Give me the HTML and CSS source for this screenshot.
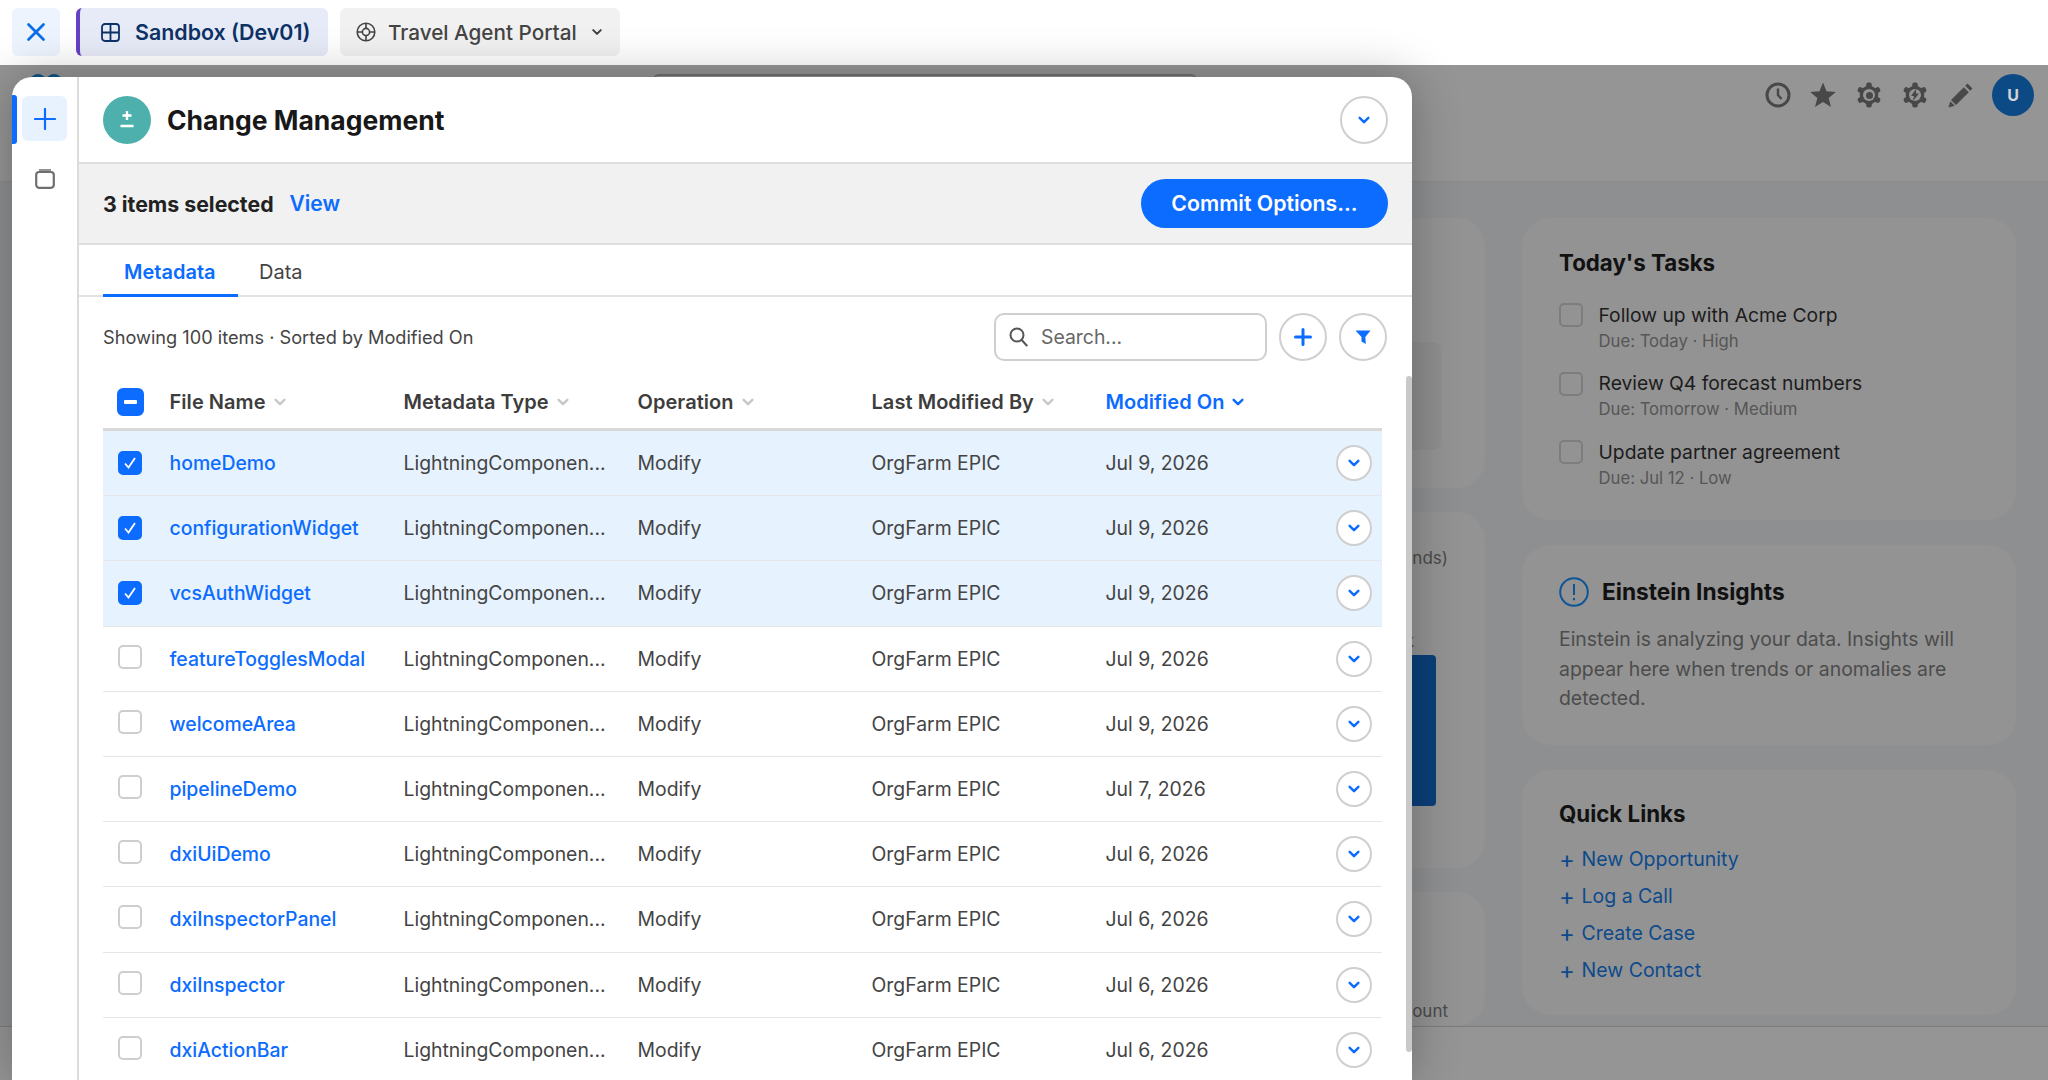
FILE: index.html
```html
<!DOCTYPE html>
<html lang="en">
<head>
<meta charset="utf-8">
<title>Change Management</title>
<link rel="stylesheet" href="styles.css">
</head>
<body>
<svg class="defs" width="0" height="0" aria-hidden="true">
  <symbol id="chev" viewBox="0 0 16 16"><path d="M3 5.500 8 10.500 13 5.500" fill="none" stroke="currentColor" stroke-width="2.800" stroke-linecap="round" stroke-linejoin="round"/></symbol>
  <symbol id="gear" viewBox="0 0 28 28"><circle cx="14" cy="14" r="10" fill="#484848"/><g fill="#484848"><rect x="11" y="0.500" width="6" height="27" rx="2.500"/><rect x="11" y="0.500" width="6" height="27" rx="2.500" transform="rotate(60 14 14)"/><rect x="11" y="0.500" width="6" height="27" rx="2.500" transform="rotate(120 14 14)"/></g></symbol>
</svg>
<header class="topbar">
  <button class="close-btn" type="button"><svg width="20" height="20" viewBox="0 0 20 20"><path d="M2.500 2.500 17.500 17.500M17.500 2.500 2.500 17.500" stroke="#0b6fe8" stroke-width="2.800" stroke-linecap="round"/></svg></button>
  <div class="app-tab app-tab-active">
    <svg width="19" height="19" viewBox="0 0 19 19"><rect x="1" y="1" width="17" height="17" rx="3" fill="none" stroke="#0d3266" stroke-width="1.800"/><path d="M9.500 1v17M1 9.500h17" stroke="#0d3266" stroke-width="1.800"/></svg>
    <span>Sandbox (Dev01)</span>
  </div>
  <div class="app-tab app-tab-idle">
    <svg width="20" height="20" viewBox="0 0 20 20" fill="none" stroke="#444" stroke-width="1.600"><circle cx="10" cy="10" r="8.800"/><circle cx="10" cy="10" r="3.600"/><path d="M10 1v5.500M10 13.500V19M1 10h5.500M13.500 10H19"/></svg>
    <span>Travel Agent Portal</span>
    <svg class="tab-chev" width="12" height="12"><use href="#chev"/></svg>
  </div>
</header>

<div class="stage">
  <div class="backdrop">
    <div class="bd-head">
      <div class="bd-logo"><i></i><i></i></div>
      <div class="bd-search"></div>
      <div class="bd-icons">
        <svg width="26" height="26" viewBox="0 0 26 26" fill="none" stroke="#484848" stroke-width="3"><circle cx="13" cy="13" r="11"/><path d="M13 6.500V13l3.500 4" stroke-width="2.400"/></svg>
        <svg width="26" height="26" viewBox="0 0 26 26"><path fill="#484848" d="M13 .5l3.500 8.700 9.300.7-7.100 6 2.300 9.100L13 20l-8 5 2.300-9.100-7.100-6 9.300-.7z"/></svg>
        <span class="gear"><svg width="26" height="26"><use href="#gear"/></svg><i class="gear-hole"></i><i class="gear-dot"></i></span>
        <span class="gear"><svg width="26" height="26"><use href="#gear"/></svg><i class="gear-hole"></i><svg class="gear-bolt" width="10" height="12" viewBox="0 0 10 12"><path fill="#484848" d="M6 0 1 7h3L3 12l6-7.500H6z"/></svg></span>
        <svg width="26" height="26" viewBox="0 0 26 26"><path fill="#484848" d="M19.500 1.500l5 5-2.300 2.300-5-5zM15.800 5.200l5 5L8 23l-5-5zM2.200 19.200l4.600 4.600L.5 25.500z"/></svg>
        <div class="bd-avatar">U</div>
      </div>
    </div>
    <div class="bd-main">
      <div class="bd-col bd-col-left">
        <section class="bd-card bd-card-a"><div class="bd-inner"></div></section>
        <section class="bd-card bd-card-b">
          <p class="bd-muted">Pipeline by Stage (Thousands)</p>
          <p class="bd-muted bd-risk">Risk</p>
          <div class="bd-bar"></div>
        </section>
        <section class="bd-card bd-card-c"><p class="bd-muted">Account</p></section>
      </div>
      <div class="bd-col bd-col-right">
        <section class="bd-card tasks">
          <h3>Today's Tasks</h3>
          <div class="task"><i class="task-box"></i><div><div class="task-name">Follow up with Acme Corp</div><div class="task-due">Due: Today · High</div></div></div>
          <div class="task"><i class="task-box"></i><div><div class="task-name">Review Q4 forecast numbers</div><div class="task-due">Due: Tomorrow · Medium</div></div></div>
          <div class="task"><i class="task-box"></i><div><div class="task-name">Update partner agreement</div><div class="task-due">Due: Jul 12 · Low</div></div></div>
        </section>
        <section class="bd-card insights">
          <h3 class="ins-head"><svg width="30" height="30" viewBox="0 0 30 30" fill="none" stroke="#0e5596" stroke-width="2"><circle cx="15" cy="15" r="13.800"/><path d="M15 7v11M15 21v2.200"/></svg>Einstein Insights</h3>
          <p>Einstein is analyzing your data. Insights will appear here when trends or anomalies are detected.</p>
        </section>
        <section class="bd-card links">
          <h3>Quick Links</h3>
          <div class="q-link"><span>+</span>New Opportunity</div>
          <div class="q-link"><span>+</span>Log a Call</div>
          <div class="q-link"><span>+</span>Create Case</div>
          <div class="q-link"><span>+</span>New Contact</div>
        </section>
      </div>
    </div>
    <div class="bd-foot"></div>
  </div>

  <div class="modal">
    <aside class="rail">
      <div class="rail-add"><svg width="22" height="22" viewBox="0 0 22 22"><path d="M11 1v20M1 11h20" stroke="#0b6cff" stroke-width="2.200" stroke-linecap="round"/></svg></div>
      <svg class="rail-doc" width="20" height="20" viewBox="0 0 20 20" fill="none" stroke="#6f6f6f" stroke-width="2.200"><rect x="1.200" y="3" width="17.600" height="15.800" rx="3"/><path d="M4 1.100h12" stroke-width="1.500"/></svg>
    </aside>
    <div class="panel">
      <div class="panel-head">
        <div class="avatar"><svg width="14" height="17" viewBox="0 0 14 17"><path d="M7 0v9M2.500 4.500h9M.5 15h13" stroke="#fff" stroke-width="2.400"/></svg></div>
        <h1>Change Management</h1>
        <button class="round round-lg" type="button"><svg width="14" height="14"><use href="#chev"/></svg></button>
      </div>
      <div class="sel-bar">
        <strong>3 items selected</strong>
        <a class="sel-view">View</a>
        <button class="commit" type="button">Commit Options...</button>
      </div>
      <div class="tabs">
        <div class="tab tab-on">Metadata</div>
        <div class="tab">Data</div>
      </div>
      <div class="toolbar">
        <span class="count">Showing 100 items · Sorted by Modified On</span>
        <div class="search">
          <svg width="19" height="20" viewBox="0 0 19 20" fill="none" stroke="#555" stroke-width="2"><circle cx="8" cy="8" r="6.500"/><path d="M12.700 13l5 5.500" stroke-linecap="round"/></svg>
          <span>Search...</span>
        </div>
        <button class="round round-lg" type="button"><svg width="18" height="18" viewBox="0 0 18 18"><path d="M9 1.500v15M1.500 9h15" stroke="#0b6cff" stroke-width="3" stroke-linecap="round"/></svg></button>
        <button class="round round-lg" type="button"><svg width="16" height="16" viewBox="0 0 16 16"><path fill="#0b6cff" d="M.5 1.500h15l-5.200 6.500.5 7-4.300-2.500V8z"/></svg></button>
      </div>
      <div class="table">
        <div class="thead row-grid">
          <span class="cb cb-mixed"><i></i></span>
          <span class="th">File Name<svg width="14" height="14"><use href="#chev"/></svg></span>
          <span class="th">Metadata Type<svg width="14" height="14"><use href="#chev"/></svg></span>
          <span class="th">Operation<svg width="14" height="14"><use href="#chev"/></svg></span>
          <span class="th">Last Modified By<svg width="14" height="14"><use href="#chev"/></svg></span>
          <span class="th th-on">Modified On<svg width="14" height="14"><use href="#chev"/></svg></span>
        </div>
        <div class="tr row-grid is-sel"><span class="cb cb-on"><svg width="16" height="16" viewBox="0 0 16 16"><path d="M3 8.500 6.500 12.500 13 3" fill="none" stroke="#fff" stroke-width="1.800"/></svg></span><a class="name">homeDemo</a><span>LightningComponen...</span><span>Modify</span><span>OrgFarm EPIC</span><span>Jul 9, 2026</span><button class="round round-sm" type="button"><svg width="14" height="14"><use href="#chev"/></svg></button></div>
        <div class="tr row-grid is-sel"><span class="cb cb-on"><svg width="16" height="16" viewBox="0 0 16 16"><path d="M3 8.500 6.500 12.500 13 3" fill="none" stroke="#fff" stroke-width="1.800"/></svg></span><a class="name">configurationWidget</a><span>LightningComponen...</span><span>Modify</span><span>OrgFarm EPIC</span><span>Jul 9, 2026</span><button class="round round-sm" type="button"><svg width="14" height="14"><use href="#chev"/></svg></button></div>
        <div class="tr row-grid is-sel"><span class="cb cb-on"><svg width="16" height="16" viewBox="0 0 16 16"><path d="M3 8.500 6.500 12.500 13 3" fill="none" stroke="#fff" stroke-width="1.800"/></svg></span><a class="name">vcsAuthWidget</a><span>LightningComponen...</span><span>Modify</span><span>OrgFarm EPIC</span><span>Jul 9, 2026</span><button class="round round-sm" type="button"><svg width="14" height="14"><use href="#chev"/></svg></button></div>
        <div class="tr row-grid"><span class="cb"></span><a class="name">featureTogglesModal</a><span>LightningComponen...</span><span>Modify</span><span>OrgFarm EPIC</span><span>Jul 9, 2026</span><button class="round round-sm" type="button"><svg width="14" height="14"><use href="#chev"/></svg></button></div>
        <div class="tr row-grid"><span class="cb"></span><a class="name">welcomeArea</a><span>LightningComponen...</span><span>Modify</span><span>OrgFarm EPIC</span><span>Jul 9, 2026</span><button class="round round-sm" type="button"><svg width="14" height="14"><use href="#chev"/></svg></button></div>
        <div class="tr row-grid"><span class="cb"></span><a class="name">pipelineDemo</a><span>LightningComponen...</span><span>Modify</span><span>OrgFarm EPIC</span><span>Jul 7, 2026</span><button class="round round-sm" type="button"><svg width="14" height="14"><use href="#chev"/></svg></button></div>
        <div class="tr row-grid"><span class="cb"></span><a class="name">dxiUiDemo</a><span>LightningComponen...</span><span>Modify</span><span>OrgFarm EPIC</span><span>Jul 6, 2026</span><button class="round round-sm" type="button"><svg width="14" height="14"><use href="#chev"/></svg></button></div>
        <div class="tr row-grid"><span class="cb"></span><a class="name">dxiInspectorPanel</a><span>LightningComponen...</span><span>Modify</span><span>OrgFarm EPIC</span><span>Jul 6, 2026</span><button class="round round-sm" type="button"><svg width="14" height="14"><use href="#chev"/></svg></button></div>
        <div class="tr row-grid"><span class="cb"></span><a class="name">dxiInspector</a><span>LightningComponen...</span><span>Modify</span><span>OrgFarm EPIC</span><span>Jul 6, 2026</span><button class="round round-sm" type="button"><svg width="14" height="14"><use href="#chev"/></svg></button></div>
        <div class="tr row-grid"><span class="cb"></span><a class="name">dxiActionBar</a><span>LightningComponen...</span><span>Modify</span><span>OrgFarm EPIC</span><span>Jul 6, 2026</span><button class="round round-sm" type="button"><svg width="14" height="14"><use href="#chev"/></svg></button></div>
      </div>
      <div class="scroll-thumb"></div>
    </div>
  </div>
</div>
</body>
</html>
```

FILE: styles.css
```css
* { box-sizing: border-box; }
html, body { margin: 0; height: 100%; }
body {
  width: 2048px; height: 1080px; overflow: hidden; background: #fff;
  font-family: Inter, "Liberation Sans", sans-serif; font-size: 19.400px; color: #444;
  display: flex; flex-direction: column;
}
.defs { position: absolute; }
button { font-family: inherit; padding: 0; cursor: pointer; }
h1, h3, p { margin: 0; }

/* top bar */
.topbar { height: 65px; flex: none; display: flex; align-items: flex-start; padding: 8px 12px; background: #fff; }
.close-btn { width: 48px; height: 48px; border: 0; border-radius: 6px; background: #eef4fd; display: flex; align-items: center; justify-content: center; margin-right: 16px; }
.app-tab { height: 48px; border-radius: 6px; display: flex; align-items: center; }
.app-tab-active { width: 252px; background: #e7ebf7; border-left: 4px solid #6541c6; padding-left: 21px; gap: 15px; color: #0d3266; font-weight: 600; font-size: 21.400px; margin-right: 12px; }
.app-tab-idle { width: 280px; background: #f1f1f1; padding-left: 16px; gap: 12px; color: #444; font-weight: 500; font-size: 20.700px; }
.tab-chev { color: #444; margin-left: 2px; }

/* dimmed page behind the modal */
.stage { position: relative; flex: 1; min-height: 0; }
.backdrop { height: 100%; display: flex; flex-direction: column; background: #8e8f91; }
.bd-head { height: 117px; flex: none; background: #959595; border-bottom: 1px solid #8a8a8a; display: flex; align-items: flex-start; padding: 9px 14px 0 30px; }
.bd-logo { display: flex; width: 623px; }
.bd-logo i { width: 16px; height: 16px; border-radius: 50%; background: #0d5687; }
.bd-search { width: 544px; height: 46px; border: 2px solid #707070; border-radius: 6px; }
.bd-icons { margin-left: auto; display: flex; align-items: center; gap: 20px; height: 42px; }
.bd-icons > svg:first-child { margin-right: -1px; }
.bd-avatar { width: 42px; height: 42px; margin-left: -2px; border-radius: 50%; background: #0b4a85; color: #d4d4d4; font-weight: 700; font-size: 16px; display: flex; align-items: center; justify-content: center; }
.gear { position: relative; width: 26px; height: 26px; }
.gear svg { display: block; }
.gear-hole { position: absolute; left: 7px; top: 7px; width: 12px; height: 12px; border-radius: 50%; background: #959595; }
.gear-dot { position: absolute; left: 9.500px; top: 9.500px; width: 7px; height: 7px; border-radius: 50%; background: #484848; }
.gear .gear-bolt { position: absolute; left: 8px; top: 7px; }

.bd-main { flex: 1; min-height: 0; display: grid; grid-template-columns: 1fr 494px; gap: 37px; padding: 36px 32px 0 24px; overflow: hidden; }
.bd-col { display: flex; flex-direction: column; }
.bd-col-left { gap: 24px; }
.bd-col-right { gap: 25px; }
.bd-card { background: #939393; border-radius: 28px; padding: 0 37px; flex: none; }
.bd-card h3 { font-size: 22.300px; font-weight: 700; color: #111; line-height: 28px; }
.bd-card-a { height: 270px; position: relative; display: flex; justify-content: flex-end; align-items: flex-start; padding: 124px 44px 0 0; }
.bd-inner { width: 80px; height: 108px; border-radius: 8px; background: #8e8e8e; }
.bd-card-b { height: 356px; display: flex; flex-direction: column; align-items: flex-end; padding-top: 34px; }
.bd-card-c { flex: 1; display: flex; justify-content: flex-end; align-items: flex-end; padding-bottom: 3px; }
.bd-muted { font-size: 17px; color: #4a4a4a; line-height: 24px; }
.bd-risk { margin: 59px 34px 0 0; }
.bd-bar { width: 700px; height: 151px; margin: 2px 12px 0 0; border-radius: 4px; background: #0b3f78; }

.tasks { height: 302px; padding-top: 31px; }
.task { display: flex; gap: 15.500px; margin-top: 0; height: 68.500px; }
.tasks h3 { margin-bottom: 29px; }
.task-box { width: 24px; height: 24px; flex: none; margin-top: -3px; border: 2px solid #7d7d7d; border-radius: 5px; }
.task-name { color: #1c1c1c; font-size: 19.300px; line-height: 24px; margin-top: -3.500px; }
.task-due { color: #565656; font-size: 16.700px; line-height: 24px; margin-top: 2px; }
.insights { height: 200px; padding-top: 32px; }
.bd-card .ins-head { display: flex; align-items: center; gap: 13px; height: 30px; margin-bottom: 18px; font-size: 22.700px; }
.insights p { color: #4c4c4c; font-size: 19.400px; line-height: 29.500px; }
.links { height: 245px; padding-top: 30px; }
.links h3 { margin-bottom: 13px; }
.q-link { height: 37px; line-height: 37px; color: #0d4a8c; font-size: 19.500px; display: flex; }
.q-link span { width: 22.500px; font-size: 24px; }
.bd-foot { height: 54px; flex: none; background: #959595; border-top: 1px solid #7c7c7c; }

/* modal */
.modal { position: absolute; left: 12px; top: 12px; bottom: 0; width: 1400px; background: #fff; border-radius: 20px 20px 0 0; display: flex; box-shadow: 0 0 48px rgba(0,0,0,.28); overflow: hidden; }
.rail { width: 67px; flex: none; border-right: 2px solid #dcdcdc; display: flex; flex-direction: column; align-items: center; padding: 19px 0 0; position: relative; }
.rail::before { content: ""; position: absolute; left: 0; top: 18px; width: 5px; height: 49px; background: #0b6cff; border-radius: 0 3px 3px 0; }
.rail-add { width: 45px; height: 45px; border-radius: 6px; background: #e8f2fe; display: flex; align-items: center; justify-content: center; }
.rail-doc { margin: 28px 0 0; }
.panel { flex: 1; min-width: 0; display: flex; flex-direction: column; position: relative; }
.panel-head { height: 87px; flex: none; border-bottom: 2px solid #dedede; display: flex; align-items: center; padding: 0 24px; gap: 16px; }
.avatar { width: 48px; height: 48px; border-radius: 50%; background: #4eb0ac; display: flex; align-items: center; justify-content: center; flex: none; }
h1 { font-size: 26.500px; font-weight: 700; color: #181818; flex: 1; }
.round { background: #fff; border: 2px solid #cfcfcf; border-radius: 50%; color: #0b6cff; display: flex; align-items: center; justify-content: center; flex: none; }
.round-lg { width: 48px; height: 48px; }
.round-sm { width: 36px; height: 36px; }
.sel-bar { height: 81px; flex: none; background: #f1f1f1; border-bottom: 2px solid #dedede; display: flex; align-items: center; padding: 0 24px; }
.sel-bar strong { font-weight: 700; color: #222; font-size: 21.300px; }
.sel-view { color: #0b6cff; font-weight: 600; font-size: 21px; margin-left: 16px; }
.commit { margin-left: auto; width: 247px; height: 49px; border: 0; border-radius: 25px; background: #0b6cff; color: #fff; font-size: 21.300px; font-weight: 600; padding-bottom: 1px; }
.tabs { height: 52px; flex: none; border-bottom: 2px solid #e2e2e2; display: flex; padding-left: 24px; font-size: 20px; }
.tab { height: 52px; padding: 0 21px; line-height: 55px; color: #444; font-weight: 400; }
.tab-on { width: 135px; color: #0b6cff; font-weight: 600; border-bottom: 3px solid #0b6cff; }
.toolbar { height: 82px; flex: none; display: flex; align-items: center; padding: 0 25px 2px 24px; gap: 12px; }
.count { color: #444; font-size: 18.200px; flex: 1; }
.search { width: 273px; height: 48px; border: 2px solid #cfcfcf; border-radius: 10px; display: flex; align-items: center; gap: 13px; padding-left: 13px; color: #666; }
.table { margin: 0 30px 0 24px; }
.row-grid { display: grid; grid-template-columns: 66.500px 234px 234px 234px 234px 1fr; align-items: center; position: relative; }
.thead { height: 52px; border-bottom: 3px solid #d8d8d8; padding-bottom: 3px; font-size: 20px; }
.th { font-weight: 600; color: #3d3d3d; display: flex; align-items: center; gap: 7px; letter-spacing: .05px; }
.th svg { color: #c8c8c8; }
.th-on, .th-on svg { color: #0b6cff; }
.tr { height: 65.200px; border-bottom: 1.500px solid #e6e6e6; }
.is-sel { background: #e6f2fe; }
.name { color: #0b6cff; font-weight: 500; }
.cb { width: 24px; height: 24px; margin: -4px 0 0 15px; border: 2px solid #cecece; border-radius: 5px; background: #fff; display: flex; align-items: center; justify-content: center; }
.cb-on { margin-top: 0; background: #0b6cff; border-color: #0b6cff; }
.cb-mixed { width: 27px; height: 28px; margin: 0 0 0 14px; background: #0b6cff; border-color: #0b6cff; border-radius: 6px; }
.cb-mixed i { width: 13px; height: 4px; background: #fff; border-radius: 1px; }
.round-sm { position: absolute; right: 10px; top: 14px; }
.scroll-thumb { position: absolute; right: 0; top: 299px; width: 6px; height: 676px; border-radius: 3px; background: #c9c9c9; }
```
